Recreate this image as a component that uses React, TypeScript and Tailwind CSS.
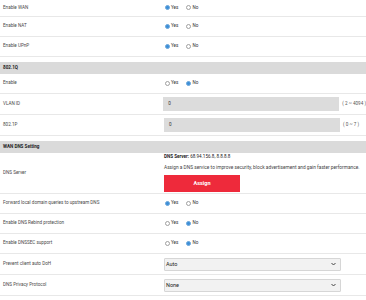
import React from "react";

const font = { fontFamily: "Roboto, 'Liberation Sans', sans-serif" };

function Radio({ checked }: { checked: boolean }) {
  return (
    <span
      className={
        "inline-block w-[5px] h-[5px] rounded-full border " +
        (checked ? "border-[#6aa6da] bg-[#3d8fd8]" : "border-[#a0a0a0] bg-white")
      }
    />
  );
}

function YesNo({ yes }: { yes: boolean }) {
  return (
    <div className="flex items-center text-[4.6px] text-[#333] pl-[1px]">
      <Radio checked={yes} />
      <span className="ml-[1px] mr-[8px]">Yes</span>
      <Radio checked={!yes} />
      <span className="ml-[1px]">No</span>
    </div>
  );
}

function Row({
  label,
  children,
  h = "h-[20px]",
}: {
  label: string;
  children: React.ReactNode;
  h?: string;
}) {
  return (
    <div className={"flex items-center border-b border-[#e8e8e8] " + h}>
      <div className="w-[164px] pl-[3px] text-[4.6px] text-[#4a4a4a]">{label}</div>
      <div className="flex-1 flex items-center">{children}</div>
    </div>
  );
}

function Header({ title }: { title: string }) {
  return (
    <div className="mt-[5px] h-[12px] bg-[#dadada] flex items-center pl-[3px] text-[4.6px] font-bold text-[#222]">
      {title}
    </div>
  );
}

function TextInput({ value, range }: { value: string; range: string }) {
  return (
    <div className="flex items-center">
      <div className="w-[176px] h-[14px] bg-[#dcdcdc] flex items-center pl-[5px] text-[4.6px] text-[#333]">
        {value}
      </div>
      <span className="ml-[3px] whitespace-nowrap text-[4.6px] text-[#555]">{range}</span>
    </div>
  );
}

function Select({ value }: { value: string }) {
  return (
    <div className="w-[177px] h-[13px] bg-[#f2f2f2] border border-[#d6d6d6] rounded-[1px] flex items-center justify-between pl-[1px] pr-[4px] text-[5.5px] text-[#222]">
      <span>{value}</span>
      <svg width="5" height="4" viewBox="0 0 10 8">
        <path d="M1 2 L5 6 L9 2" stroke="#444" strokeWidth="2" fill="none" />
      </svg>
    </div>
  );
}

export default function App() {
  return (
    <div className="w-[366px] h-[300px] bg-white overflow-hidden" style={font}>
      <Row label="Enable WAN" h="h-[17px]">
        <YesNo yes />
      </Row>
      <Row label="Enable NAT">
        <YesNo yes />
      </Row>
      <Row label="Enable UPnP">
        <YesNo yes />
      </Row>
      <Header title="802.1Q" />
      <Row label="Enable">
        <YesNo yes={false} />
      </Row>
      <Row label="VLAN ID" h="h-[21px]">
        <TextInput value="0" range="( 2 ~ 4094 )" />
      </Row>
      <Row label="802.1P" h="h-[21px]">
        <TextInput value="0" range="( 0 ~ 7 )" />
      </Row>
      <Header title="WAN DNS Setting" />
      <Row label="DNS Server" h="h-[41px]">
        <div className="flex flex-col text-[4.6px] text-[#333]">
          <div className="font-bold text-[#222]">
            DNS Server: <span className="font-normal">68.94.156.8, 8.8.8.8</span>
          </div>
          <div className="mt-[3px] whitespace-nowrap text-[4.8px] text-[#444]">
            Assign a DNS service to improve security, block advertisement and gain faster performance.
          </div>
          <div className="mt-[3px] w-[76px] h-[17px] bg-[#ee2a3b] text-white font-bold text-[5.5px] flex items-center justify-center">
            Assign
          </div>
        </div>
      </Row>
      <Row label="Forward local domain queries to upstream DNS">
        <YesNo yes />
      </Row>
      <Row label="Enable DNS Rebind protection">
        <YesNo yes={false} />
      </Row>
      <Row label="Enable DNSSEC support">
        <YesNo yes={false} />
      </Row>
      <Row label="Prevent client auto DoH" h="h-[21px]">
        <Select value="Auto" />
      </Row>
      <Row label="DNS Privacy Protocol" h="h-[21px]">
        <Select value="None" />
      </Row>
    </div>
  );
}
